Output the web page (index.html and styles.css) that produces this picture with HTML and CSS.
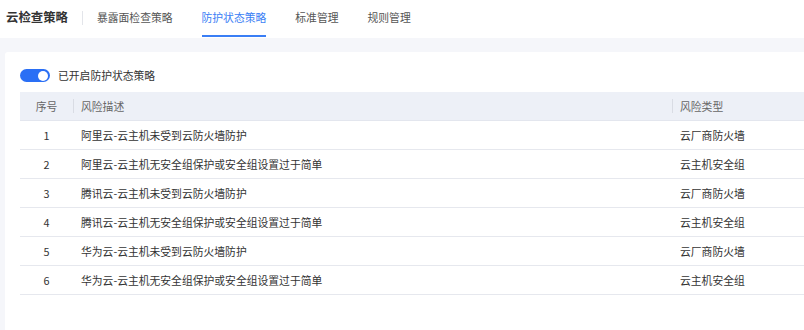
FILE: index.html
```html
<!DOCTYPE html>
<html lang="zh-CN">
<head>
    <meta charset="UTF-8">
    <title>云检查策略</title>
    <link rel="stylesheet" href="styles.css">
</head>
<body>
    <div class="topbar">
        <div class="brand">云检查策略</div>
        <div class="divider"></div>
        <nav class="tabs">
            <a class="tab">暴露面检查策略</a>
            <a class="tab active">防护状态策略</a>
            <a class="tab">标准管理</a>
            <a class="tab">规则管理</a>
        </nav>
    </div>

    <div class="content">
        <div class="card">
            <div class="switch-row">
                <span class="switch on"><span class="knob"></span></span>
                <span class="switch-label">已开启防护状态策略</span>
            </div>

            <table class="risk-table">
                <colgroup>
                    <col class="col-no">
                    <col class="col-desc">
                    <col class="col-type">
                </colgroup>
                <thead>
                    <tr>
                        <th class="center">序号</th>
                        <th class="sep">风险描述</th>
                        <th class="sep">风险类型</th>
                    </tr>
                </thead>
                <tbody>
                    <tr><td class="center">1</td><td>阿里云-云主机未受到云防火墙防护</td><td>云厂商防火墙</td></tr>
                    <tr><td class="center">2</td><td>阿里云-云主机无安全组保护或安全组设置过于简单</td><td>云主机安全组</td></tr>
                    <tr><td class="center">3</td><td>腾讯云-云主机未受到云防火墙防护</td><td>云厂商防火墙</td></tr>
                    <tr><td class="center">4</td><td>腾讯云-云主机无安全组保护或安全组设置过于简单</td><td>云主机安全组</td></tr>
                    <tr><td class="center">5</td><td>华为云-云主机未受到云防火墙防护</td><td>云厂商防火墙</td></tr>
                    <tr><td class="center">6</td><td>华为云-云主机无安全组保护或安全组设置过于简单</td><td>云主机安全组</td></tr>
                </tbody>
            </table>
        </div>
    </div>
</body>
</html>
```

FILE: styles.css
```css
* {
    margin: 0;
    padding: 0;
    box-sizing: border-box;
}

body {
    width: 804px;
    height: 330px;
    overflow: hidden;
    background: #f5f6fa;
    font-family: "Noto Sans CJK SC", "Noto Sans", sans-serif;
    font-size: 10.8px;
    color: #333;
}

/* top navigation */
.topbar {
    height: 38px;
    background: #fff;
    display: flex;
    align-items: flex-start;
    padding-left: 6px;
}

.brand {
    font-size: 12.4px;
    font-weight: bold;
    color: #333;
    line-height: 14px;
    padding-top: 10px;
}

.divider {
    width: 1px;
    height: 14px;
    background: #e3e5ea;
    margin: 11px 14px 0 14px;
}

.tabs {
    display: flex;
    gap: 29px;
}

.tab {
    display: block;
    color: #555;
    line-height: 14px;
    padding: 10px 0 11px;
    border-bottom: 2px solid transparent;
    cursor: pointer;
}

.tab.active {
    color: #3a7ef5;
    border-bottom-color: #3a7ef5;
}

/* page body */
.content {
    padding: 14px 0 0 5px;
}

.card {
    width: 830px;
    height: 290px;
    background: #fff;
    border-radius: 3px;
    padding: 17px 0 0 15px;
}

.switch-row {
    display: flex;
    align-items: center;
    gap: 8px;
    height: 13px;
    margin-bottom: 10px;
}

.switch {
    width: 30px;
    height: 13px;
    border-radius: 7px;
    background: #2a6ff5;
    display: flex;
    align-items: center;
    justify-content: flex-end;
    padding-right: 2px;
}

.knob {
    width: 10px;
    height: 10px;
    border-radius: 50%;
    background: #fff;
}

.switch-label {
    color: #333;
    line-height: 13px;
}

/* table */
.risk-table {
    border-collapse: collapse;
    table-layout: fixed;
    width: 805px;
}

.col-no { width: 53px; }
.col-desc { width: 599px; }
.col-type { width: 153px; }

.risk-table th {
    position: relative;
    height: 28px;
    background: #edf0f7;
    color: #666;
    font-weight: normal;
    text-align: left;
    padding-left: 8px;
    border-bottom: 1px solid #e3e6ee;
}

.risk-table th.sep::before {
    content: "";
    position: absolute;
    left: 0;
    top: 7px;
    width: 1px;
    height: 14px;
    background: #d9dce4;
}

.risk-table td {
    height: 29px;
    padding-left: 8px;
    border-bottom: 1px solid #e6e8ee;
    white-space: nowrap;
}

.risk-table .center {
    text-align: center;
    padding-left: 0;
}
```
